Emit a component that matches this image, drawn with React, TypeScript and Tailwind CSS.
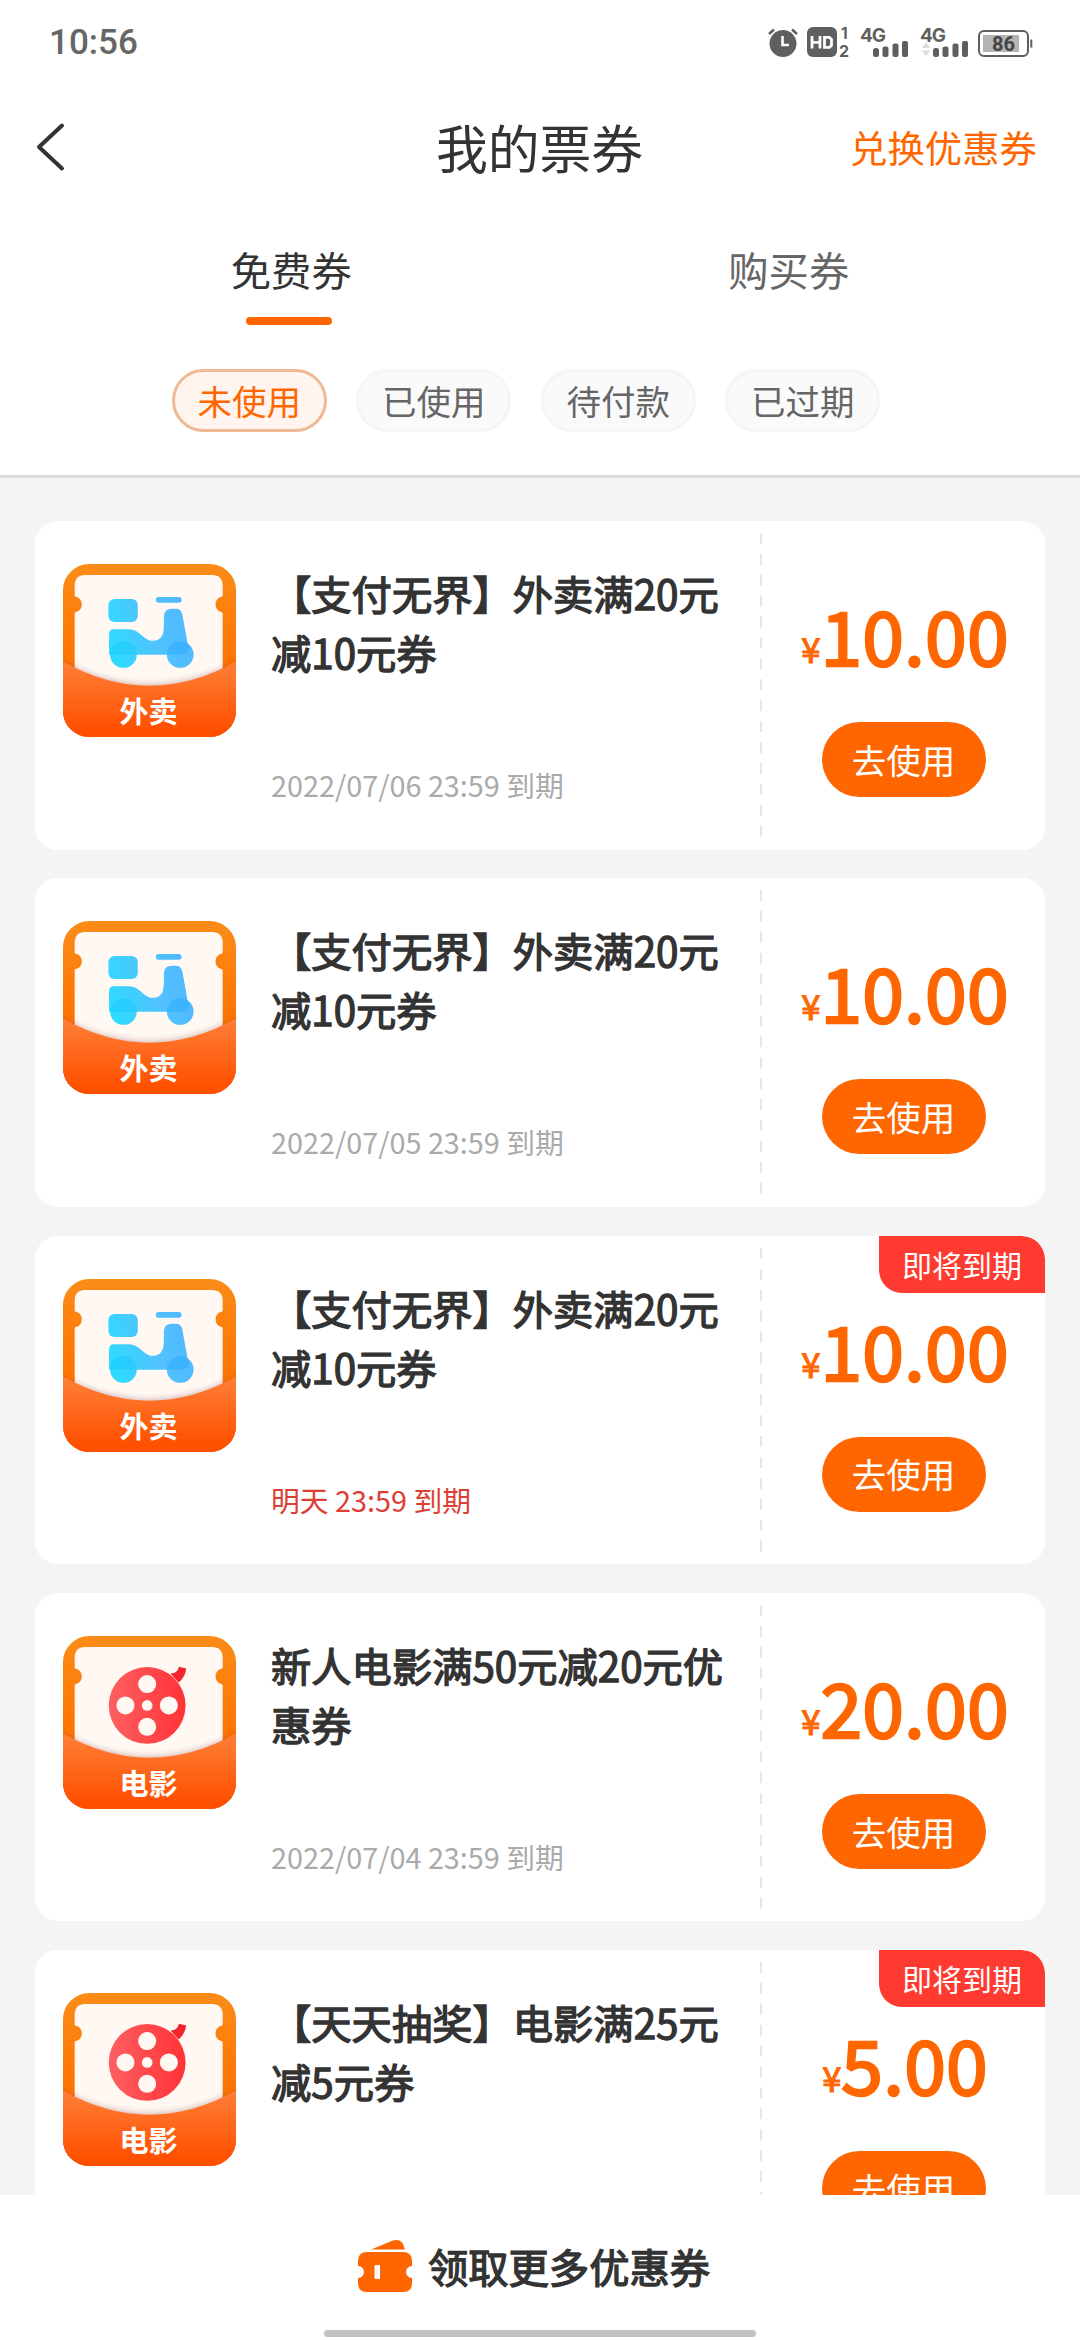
import { clsx } from "clsx";

type CouponKind = "takeout" | "movie";

type Coupon = {
  id: number;
  kind: CouponKind;
  title: string;
  expires: string;
  amount: string;
  expiring?: boolean;
};

const FILTERS = ["未使用", "已使用", "待付款", "已过期"];

const COUPONS: Coupon[] = [
  { id: 1, kind: "takeout", title: "【支付无界】外卖满20元减10元券", expires: "2022/07/06 23:59 到期", amount: "10.00" },
  { id: 2, kind: "takeout", title: "【支付无界】外卖满20元减10元券", expires: "2022/07/05 23:59 到期", amount: "10.00" },
  { id: 3, kind: "takeout", title: "【支付无界】外卖满20元减10元券", expires: "明天 23:59 到期", amount: "10.00", expiring: true },
  { id: 4, kind: "movie", title: "新人电影满50元减20元优惠券", expires: "2022/07/04 23:59 到期", amount: "20.00" },
  { id: 5, kind: "movie", title: "【天天抽奖】电影满25元减5元券", expires: "明天 23:59 到期", amount: "5.00", expiring: true },
];

function SignalIcon({ x, data }: { x: number; data?: boolean }) {
  return (
    <g transform={`translate(${x} 0)`}>
      <text x="-0.500" y="15.500" fontSize="19" fontWeight="700" letterSpacing="-1" className="font-['Inter',sans-serif]">
        4G
      </text>
      {data && (
        <g fill="#dcdcdc">
          <path d="M1 22 L5.5 16.5 L10 22 Z" />
          <path d="M1 24.500 H10 L5.500 30 Z" />
        </g>
      )}
      <rect x="12.500" y="22" width="6" height="9" rx="2.500" />
      <rect x="22" y="20.500" width="6" height="10.500" rx="2" />
      <rect x="32" y="17.500" width="6" height="13.500" rx="2" />
      <rect x="41.500" y="15" width="6" height="16" rx="2" />
    </g>
  );
}

function StatusIcons() {
  return (
    <svg width="268" height="54" viewBox="0 -10 268 54" fill="#5f5f5f" aria-hidden="true">
      {/* alarm */}
      <circle cx="17" cy="17.500" r="13.500" />
      <path d="M3 8 L8 3.500 M26 3.500 L31 8" stroke="#5f5f5f" strokeWidth="2.500" />
      <path d="M16.500 10 V19 H23" fill="none" stroke="#fff" strokeWidth="2.600" />
      {/* volte */}
      <rect x="41" y="1" width="30" height="30" rx="6" />
      <path
        d="M46 10 V22.500 M54 10 V22.500 M46 16.300 H54 M58.500 11.300 H63.500 L65.500 13.500 V19.500 L63.500 21.300 H58.500 Z"
        fill="none"
        stroke="#fff"
        strokeWidth="2.800"
      />
      <text x="75" y="12.500" fontSize="15.500" fontWeight="700" className="font-['Inter',sans-serif]">
        1
      </text>
      <text x="73" y="30.500" fontSize="16" fontWeight="700" className="font-['Inter',sans-serif]">
        2
      </text>
      <SignalIcon x={94.5} />
      <SignalIcon x={154.5} data />
      {/* battery */}
      <rect x="213" y="5" width="49" height="25" rx="5" fill="#fff" stroke="#5f5f5f" strokeWidth="2" />
      <rect x="217" y="9" width="36" height="17" fill="#b4b4b4" />
      <rect x="264.300" y="13.500" width="2" height="8" />
      <text x="226" y="24.500" fontSize="20" fontWeight="700" fill="#444" className="font-['Roboto',sans-serif]">
        86
      </text>
    </svg>
  );
}

function IconDefs() {
  return (
    <svg className="absolute h-0 w-0" aria-hidden="true">
      <defs>
        <linearGradient id="frame" x1="0" y1="0" x2="0" y2="1">
          <stop offset="0" stopColor="#fb8c18" />
          <stop offset="0.500" stopColor="#ff7604" />
          <stop offset="1" stopColor="#ff6a00" />
        </linearGradient>
        <linearGradient id="pocket" x1="0" y1="0" x2="0" y2="1">
          <stop offset="0" stopColor="#ff8038" />
          <stop offset="0.900" stopColor="#ff5000" />
        </linearGradient>
        <linearGradient id="scooter" gradientUnits="userSpaceOnUse" x1="140" y1="240" x2="380" y2="160">
          <stop offset="0" stopColor="#2edbff" />
          <stop offset="0.550" stopColor="#52c2ff" />
          <stop offset="1" stopColor="#4fb8ff" />
        </linearGradient>
        <linearGradient id="reel" x1="0" y1="0.500" x2="1" y2="0.500">
          <stop offset="0" stopColor="#ff5f62" />
          <stop offset="1" stopColor="#ff3337" />
        </linearGradient>
        <clipPath id="tile">
          <rect width="518" height="518" rx="78" />
        </clipPath>
        <filter id="soft" x="-10%" y="-10%" width="120%" height="120%">
          <feGaussianBlur stdDeviation="9" />
        </filter>
      </defs>
    </svg>
  );
}

function Scooter() {
  return (
    <g fill="url(#scooter)">
      <rect x="136" y="105" width="88" height="69" rx="18" />
      <rect x="278" y="99" width="77" height="17" rx="8" />
      <path d="M152 195 H196 C232 195 240 230 270 230 C296 230 302 208 302 184 V158 Q302 134 326 134 H336 Q353 134 357 150 L373 238 Q388 250 389 272 H138 V210 Q138 195 152 195 Z" />
      <circle cx="181" cy="271" r="40" />
      <circle cx="351" cy="271" r="40" />
      <path d="M141 271 A40 40 0 0 1 221 271 Z" fill="#16c8fb" opacity="0.500" />
      <path d="M311 271 A40 40 0 0 1 373 238 L377 252 Q375 266 362 271 Z" fill="#28a9ff" opacity="0.500" />
    </g>
  );
}

function FilmReel() {
  return (
    <g>
      <path d="M322 112 Q343 112 347 92 L369 97 Q366 123 346 139 Z" fill="#f3262d" />
      <circle cx="252" cy="208" r="115" fill="url(#reel)" />
      <g fill="#fff8f3">
        <circle cx="252" cy="144" r="27" />
        <circle cx="187" cy="208" r="27" />
        <circle cx="317" cy="208" r="27" />
        <circle cx="252" cy="272" r="27" />
        <circle cx="252" cy="208" r="16" />
      </g>
    </g>
  );
}

function CouponIcon({ kind }: { kind: CouponKind }) {
  return (
    <svg className="size-[173px] shrink-0" viewBox="0 0 518 518" aria-hidden="true">
      <g clipPath="url(#tile)">
        <rect width="518" height="518" fill="url(#frame)" />
        <path
          d="M67 33 H446 Q478 33 478 65 V95 Q478 98 474 98 A24 24 0 0 0 474 144 Q478 144 478 148 V400 H35 V148 Q35 144 39 144 A24 24 0 0 0 39 98 Q35 98 35 95 V65 Q35 33 67 33 Z"
          fill="#fff8f3"
        />
        {kind === "takeout" ? <Scooter /> : <FilmReel />}
        <path d="M-20 284 Q259 440 538 284 V518 H-20 Z" fill="#8a3a3a" opacity="0.400" filter="url(#soft)" />
        <path d="M0 292 Q259 437 518 292 V518 H0 Z" fill="url(#pocket)" />
        <text
          x="256"
          y="477"
          textAnchor="middle"
          fontSize="87"
          fontWeight="700"
          fill="#fff"
          className="font-['Noto_Sans_CJK_SC',sans-serif]"
        >
          {kind === "takeout" ? "外卖" : "电影"}
        </text>
      </g>
    </svg>
  );
}

function CouponCard({ coupon }: { coupon: Coupon }) {
  return (
    <li className="relative flex h-[328.5px] shrink-0 overflow-hidden rounded-[23px] bg-white">
      <div className="flex w-[725px] pt-[43px] pl-7">
        <CouponIcon kind={coupon.kind} />
        <div className="-mt-px ml-[35px] flex h-[243px] w-[460px] flex-col justify-between">
          <h2 className="text-[40.3px] leading-[59px] text-[#333] [-webkit-text-stroke:1.3px_#333]">{coupon.title}</h2>
          <p className={clsx("text-[28.8px] leading-[42px]", coupon.expiring ? "text-[#dc4035]" : "text-[#aaa]")}>
            {coupon.expires}
          </p>
        </div>
      </div>

      <svg className="mt-3 h-[305px] w-0.5 shrink-0" aria-hidden="true">
        <line x1="1" y1="0" x2="1" y2="305" stroke="#e6e6e6" strokeWidth="2" strokeDasharray="11 9.900" />
      </svg>

      <div className="flex flex-1 flex-col items-center">
        <div className="mt-[58px] flex h-[110px] items-baseline pl-[3px] text-[#f60]">
          <span className="relative -top-[3px] text-[34.5px] leading-[110px] [-webkit-text-stroke:1.1px_#f60]">¥</span>
          <span className="text-[75px] leading-[110px] tracking-[0.2px] [-webkit-text-stroke:2.4px_#f60]">
            {coupon.amount}
          </span>
        </div>
        <button className="mt-[33px] flex h-[75px] w-[164px] items-center justify-center rounded-full bg-[#f60] text-[34.5px] text-white">
          去使用
        </button>
      </div>

      {coupon.expiring && (
        <span className="absolute top-0 right-0 flex h-[57px] w-[166px] items-center justify-center rounded-tr-[23px] rounded-bl-[23px] bg-[#ff3a30] text-[30px] text-white">
          即将到期
        </span>
      )}
    </li>
  );
}

export default function App() {
  return (
    <div className="flex h-[2340px] w-[1080px] flex-col overflow-hidden bg-white font-['Noto_Sans_CJK_SC',sans-serif] text-[#333]">
      <IconDefs />

      <header className="flex h-[478px] shrink-0 flex-col border-b-[3px] border-[#dcdcdc]">
        <div className="flex h-[84px] items-center justify-between pt-0.5 pr-[46px] pl-[49px]">
          <span className="font-['Roboto',sans-serif] text-[35px] font-medium text-[#666]">10:56</span>
          <StatusIcons />
        </div>

        <div className="grid h-[126px] grid-cols-3 items-center pr-[43px] pl-[34px]">
          <svg width="34" height="50" viewBox="0 0 34 50" fill="none" aria-label="返回">
            <path
              d="M28 3.500 L5 25 L28 46.500"
              stroke="#333"
              strokeWidth="4"
              strokeLinecap="round"
              strokeLinejoin="round"
            />
          </svg>
          <h1 className="pl-2 text-center text-[51.8px] whitespace-nowrap">我的票券</h1>
          <a className="text-right text-[37.4px] whitespace-nowrap text-[#f60]">兑换优惠券</a>
        </div>

        <nav className="flex h-[115px] px-[43px] text-[40.3px]">
          <div className="flex flex-1 flex-col items-center pt-[30px]">
            <span className="leading-[58px]">免费券</span>
            <span className="mt-[19px] mr-[5px] h-2 w-[86px] rounded-full bg-[#f60]" />
          </div>
          <div className="flex flex-1 flex-col items-center pt-[30px] pl-px">
            <span className="leading-[58px] text-[#666]">购买券</span>
          </div>
        </nav>

        <div className="mt-[44px] flex justify-center gap-[29.5px] pr-[28px]">
          {FILTERS.map((label, i) => (
            <button
              key={label}
              className={clsx(
                "flex h-[63px] w-[155px] items-center justify-center rounded-full border-[3px] text-[34.5px]",
                i === 0 ? "border-[#efb995] bg-[#fff5ee] text-[#f60]" : "border-[#f5f5f5] bg-[#fafafa] text-[#666]",
              )}
            >
              {label}
            </button>
          ))}
        </div>
      </header>

      <main className="min-h-0 flex-1 overflow-hidden bg-[#f4f4f4] px-[35px] pt-[43px]">
        <ul className="flex flex-col gap-[28.8px]">
          {COUPONS.map((coupon) => (
            <CouponCard key={coupon.id} coupon={coupon} />
          ))}
        </ul>
      </main>

      <footer className="flex h-[145px] shrink-0 flex-col items-center justify-between bg-white pt-[41px] pb-[3px]">
        <div className="flex items-center gap-[15px] pr-[13px]">
          <svg width="56" height="54" viewBox="0 0 56 54" fill="#f60" aria-hidden="true">
            <path d="M14 10.500 L36 1.500 Q43 -0.500 46 5 L48 10.500 Z" />
            <path d="M10 13 H46 Q55 13 55 22 V27 A6 6 0 0 0 55 39 V44 Q55 53 46 53 H10 Q1 53 1 44 V39 A6 6 0 0 0 1 27 V22 Q1 13 10 13 Z" />
            <rect x="17.500" y="26" width="5.500" height="14" rx="1" fill="#fff" />
          </svg>
          <span className="text-[40.3px] leading-[60px] [-webkit-text-stroke:1.3px_#333]">领取更多优惠券</span>
        </div>
        <div className="h-[7px] w-[432px] rounded-full bg-[#c1c1c1]" />
      </footer>
    </div>
  );
}
